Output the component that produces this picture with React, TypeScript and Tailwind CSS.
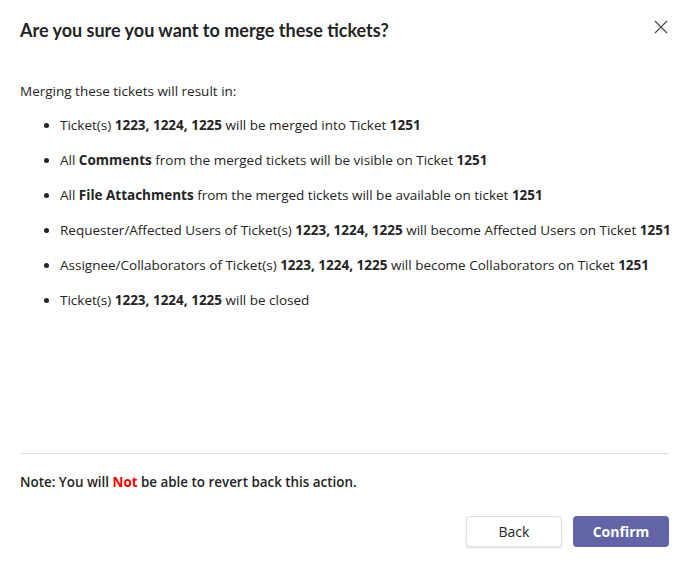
import React from "react";

const items: React.ReactNode[] = [
  <>Ticket(s) <b>1223, 1224, 1225</b> will be merged into Ticket <b>1251</b></>,
  <>All <b>Comments</b> from the merged tickets will be visible on Ticket <b>1251</b></>,
  <>All <b>File Attachments</b> from the merged tickets will be available on ticket <b>1251</b></>,
  <>Requester/Affected Users of Ticket(s) <b>1223, 1224, 1225</b> will become Affected Users on Ticket <b>1251</b></>,
  <>Assignee/Collaborators of Ticket(s) <b>1223, 1224, 1225</b> will become Collaborators on Ticket <b>1251</b></>,
  <>Ticket(s) <b>1223, 1224, 1225</b> will be closed</>,
];

export default function App() {
  return (
    <div className="w-[691px] h-[564px] bg-white text-[#242424] flex flex-col pl-[20px] pr-[22px] font-['Open_Sans',sans-serif]">
      <div className="flex items-start justify-between pt-[18px]">
        <h1 className="text-[18px] font-bold leading-[24px] font-['Lato',sans-serif]">Are you sure you want to merge these tickets?</h1>
        <button className="mr-[1px] mt-[2px] text-[#424242]">
          <svg width="14" height="14" viewBox="0 0 14 14" fill="none" stroke="currentColor" strokeWidth="1.1">
            <path d="M1 1 L13 13 M13 1 L1 13" />
          </svg>
        </button>
      </div>
      <p className="mt-[39px] text-[13.5px] leading-[20px]">Merging these tickets will result in:</p>
      <ul className="mt-[14px] flex flex-col gap-[15px] pl-[40px] list-disc text-[13.5px] leading-[20px]">
        {items.map((it, i) => (
          <li key={i} className="whitespace-nowrap">{it}</li>
        ))}
      </ul>
      <div className="flex-1" />
      <div className="border-t border-[#e0e0e0]" />
      <p className="mt-[18px] text-[13.4px] leading-[20px] font-semibold">
        Note: You will <span className="text-[#ff0000] font-bold">Not</span> be able to revert back this action.
      </p>
      <div className="flex justify-end gap-[11px] mt-[24px] mb-[17px]">
        <button className="w-[96px] h-[31px] rounded-[4px] border border-[#e0e0e0] bg-white text-[14px] shadow-[0_1px_2px_rgba(0,0,0,0.15)]">Back</button>
        <button className="w-[96px] h-[31px] rounded-[4px] bg-[#6264a7] text-white text-[14px] font-bold">Confirm</button>
      </div>
    </div>
  );
}
